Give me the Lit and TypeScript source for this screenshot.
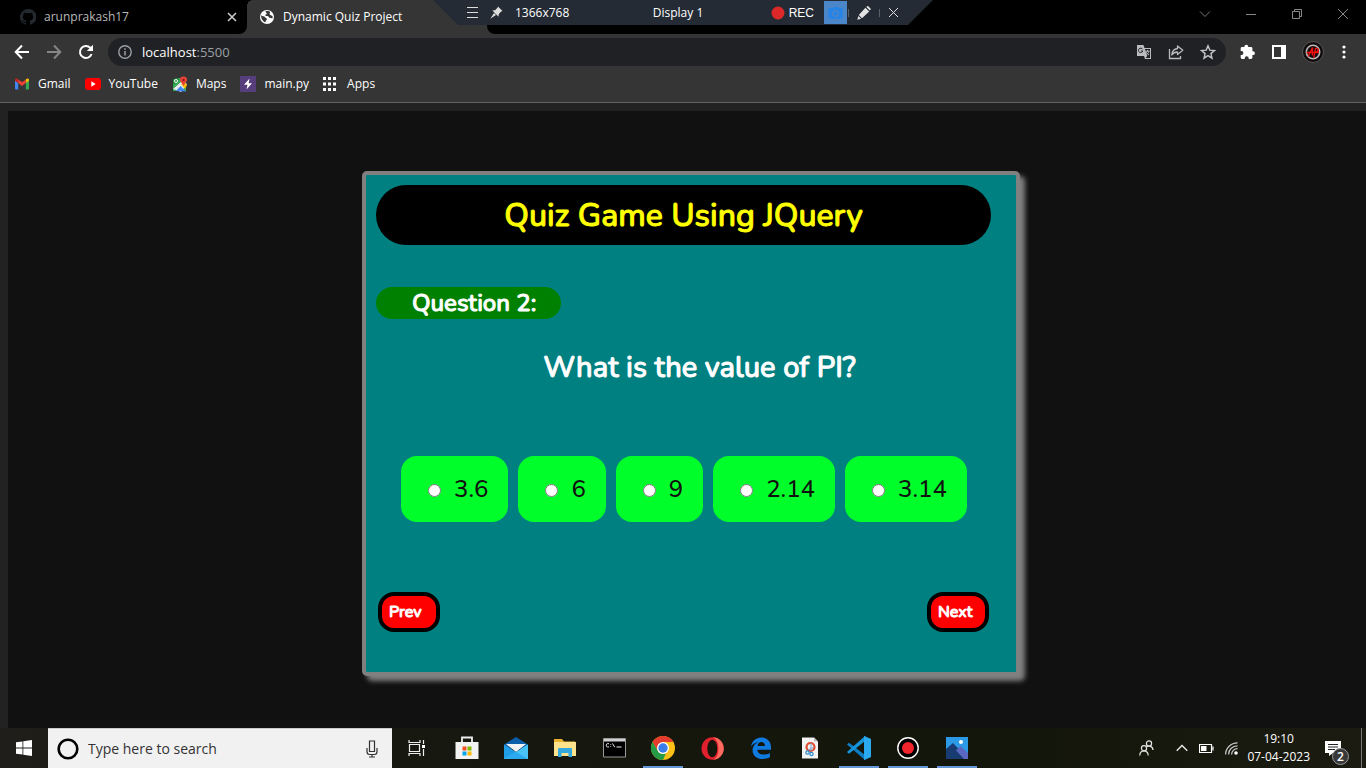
import { LitElement, html, css, svg, TemplateResult } from "lit";
import { customElement, state } from "lit/decorators.js";
import { classMap } from "lit/directives/class-map.js";

const icon = (w: number, h: number, box: string, body: unknown): TemplateResult =>
  html`<svg width=${w} height=${h} viewBox=${box} fill="none" aria-hidden="true">${body}</svg>`;

/* Browser icons */
const github = icon(16, 16, "0 0 16 16", svg`<path fill="#24292f" fill-rule="evenodd" d="M8 0a8 8 0 0 0-2.53 15.59c.4.07.55-.17.55-.38v-1.34C3.8 14.35 3.33 12.9 3.33 12.9c-.36-.92-.89-1.17-.89-1.17-.73-.5.05-.49.05-.49.8.06 1.23.83 1.23.83.71 1.22 1.87.87 2.33.66.07-.52.28-.87.5-1.07-1.77-.2-3.64-.89-3.64-3.95 0-.88.31-1.59.82-2.15-.08-.2-.36-1.02.08-2.12 0 0 .67-.21 2.2.82a7.6 7.6 0 0 1 4 0c1.53-1.04 2.2-.82 2.2-.82.44 1.1.16 1.92.08 2.12.51.56.82 1.27.82 2.15 0 3.07-1.87 3.75-3.65 3.95.29.25.54.73.54 1.48v2.2c0 .21.15.46.55.38A8 8 0 0 0 8 0Z"/>`);
const globe = icon(14, 14, "0 0 14 14", svg`<circle cx="7" cy="7" r="7" fill="#fff"/><path fill="#353535" d="M1 5.2C2.6 6.4 4.4 5.9 5 7.2c.5 1.100 1.900.8 2 1.900.1 1.200-1.400 1-1.300 2.200.1 1-.5 1.200-1.100.7C2.600 10.900 1 8.500 1 5.200ZM5.500 1.300c-.3 1.500 1.600 1.200 1.300 2.500-.2.9-1.700.6-1.600 1.500.2 1.200 2.200.4 3 .9.900.600.500 1.500 1.700 1.600 1.100.1 1.100.9 2.700.2l.2-1.600c-1.100-.4-1.300-1.300-2.200-1.500-1-.2-1.400-1-.7-1.900.4-.5.200-1.200-.4-1.600C8.200.9 6.700.900 5.500 1.300Z"/>`);
const cross = icon(10, 10, "0 0 10 10", svg`<path d="M1 1l8 8M9 1L1 9" stroke="#cfcfcf" stroke-width="1.500"/>`);
const back = icon(16, 16, "0 0 16 16", svg`<path d="M15 8H2M8 1.500L1.700 8 8 14.500" stroke="#fff" stroke-width="2"/>`);
const forward = icon(16, 16, "0 0 16 16", svg`<path d="M1 8h13M8 1.500L14.300 8 8 14.500" stroke="#868686" stroke-width="2"/>`);
const reload = icon(16, 16, "0 0 16 16", svg`<path d="M13.600 10A6 6 0 1 1 12.300 3.800L14 5.500" stroke="#fff" stroke-width="2"/><path fill="#fff" d="M15 .8v6.200H8.800z"/>`);
const info = icon(14, 14, "0 0 14 14", svg`<circle cx="7" cy="7" r="6.200" stroke="#9aa0a6" stroke-width="1.400"/><path d="M7 6v4.500M7 3.300v1.500" stroke="#9aa0a6" stroke-width="1.500"/>`);
const translate = icon(16, 16, "0 0 16 16", svg`<path fill="#b9bbbd" d="M1 1h6.500l1 3H15v11H9l-1-3H1z"/><path fill="#202124" d="M8.900 5H14v9H9.800l1.400-2z"/><path d="M6.600 5.300a2.200 2.200 0 1 0 .2 1.700H5" stroke="#202124"/><path d="M9.500 7.200h4M11.500 6v1.200M12.800 7.200c-.3 1.700-1.300 2.700-2.300 3.400M10.300 8.200c.5 1.200 1.500 2.200 2.700 2.900" stroke="#b9bbbd"/>`);
const share = icon(16, 16, "0 0 16 16", svg`<path d="M1.500 5v9.500h11V12" stroke="#b9bbbd" stroke-width="1.300"/><path d="M9.500 2l5.300 4.300-5.300 4.200V8C6.500 8 5 9 3.800 11c.2-3.500 2.200-6 5.700-6.500z" stroke="#b9bbbd" stroke-width="1.300" stroke-linejoin="round"/>`);
const star = icon(16, 16, "0 0 16 16", svg`<path d="M8 1.800l1.800 4.300 4.700.4-3.600 3.100 1.100 4.600L8 11.700l-4 2.500 1.100-4.600L1.500 6.500l4.700-.4z" stroke="#c4c6c8" stroke-width="1.400"/>`);
const puzzle = icon(16, 16, "0 0 16 16", svg`<path fill="#fff" d="M13 7.300h-.6V4.500c0-.8-.6-1.400-1.400-1.400H8.200v-.5a1.900 1.900 0 0 0-3.800 0v.5H2.100C1.300 3.100.7 3.700.7 4.500v2.600h.7a2 2 0 0 1 0 4H.700v2.500c0 .8.6 1.400 1.400 1.400h2.600v-.7a2 2 0 0 1 4 0v.7H11c.8 0 1.400-.6 1.400-1.400v-2.500h.6a1.900 1.900 0 0 0 0-3.800z"/>`);
const sidePanel = icon(14, 14, "0 0 14 14", svg`<path fill="#fff" fill-rule="evenodd" d="M0 0h14v14H0zM2 2h7v10H2z"/>`);
const avatar = icon(22, 22, "0 0 22 22", svg`<circle cx="11" cy="11" r="10.500" fill="#120c0c" stroke="#555"/><circle cx="11" cy="11" r="6.700" stroke="#b9b9b9" stroke-width="1.600"/><path d="M6.200 15.500L10.500 6.500v8M4.500 11.500H17M11.800 17l1.700-9.500c3.600-.8 4 3.200-.8 4" stroke="#f01010" stroke-width="1.400"/>`);
const dots = icon(4, 14, "0 0 4 14", svg`<g fill="#fff"><circle cx="2" cy="2" r="1.600"/><circle cx="2" cy="7" r="1.600"/><circle cx="2" cy="12" r="1.600"/></g>`);
const gmail = icon(16, 12, "-1 0 16 12", svg`<path fill="#4285f4" d="M0 2v8.500c0 .6.400 1 1 1h2.200V5z"/><path fill="#34a853" d="M14 2v8.500c0 .6-.4 1-1 1h-2.200V5z"/><path fill="#fbbc04" d="M10.800 1.500V5L14 2.700V2c0-1.500-1.500-1.900-2.500-1.100z"/><path fill="#c5221f" d="M0 2v.7L3.200 5V1.500L2.500.9C1.500.1 0 .5 0 2z"/><path fill="#ea4335" d="M3.200 1.500L7 4.300l3.800-2.800V5L7 8 3.200 5z"/>`);
const youtube = icon(16, 12, "0 0 16 12", svg`<rect width="16" height="12" rx="3" fill="#f00"/><path fill="#fff" d="M6.300 3.300v5.400L10.700 6z"/>`);
const maps = icon(16, 16, "0 0 16 16", svg`<path fill="#34a853" d="M1 3l7-1 6 4v9H1z"/><path fill="#e8eaed" d="M1 13L10 5l5 3-6 8z"/><path fill="#4285f4" d="M4 15l4.500-5 5.500 5.500z"/><path fill="#fbbc04" d="M9 8l4-1 2 2-2 4z"/><path fill="#1e8e3e" d="M1 3h7L1 9z"/><circle cx="4" cy="5" r="1.500" stroke="#fff"/><path fill="#ea4335" d="M11.500.5a3.500 3.500 0 0 1 3.500 3.600c0 2-2 2.900-3.500 5.900C10 7 8 6.100 8 4.100A3.500 3.500 0 0 1 11.500.5z"/><circle cx="11.500" cy="4" r="1.200" fill="#8c1d18"/>`);
const bolt = icon(16, 16, "0 0 16 16", svg`<path fill="#563d7c" d="M0 0h16v16H0z"/><path fill="#fff" d="M9.600 2.500L4 8.800h3.500l-1 4.700L12 7.300H8.600z"/>`);
const appsGrid = icon(16, 14, "0 0 16 14", svg`<path fill="#fff" d="M0 0h3v3H0zM5 0h3v3H5zM10 0h3v3h-3zM0 5.500h3v3H0zM5 5.500h3v3H5zM10 5.500h3v3h-3zM0 11h3v3H0zM5 11h3v3H5zM10 11h3v3h-3z"/>`);
const chevDown = icon(12, 12, "0 0 12 12", svg`<path d="M1 3.500l5 5 5-5" stroke="#777"/>`);
const minimise = icon(12, 12, "0 0 12 12", svg`<path d="M1 6.500h10" stroke="#888"/>`);
const restore = icon(12, 12, "0 0 12 12", svg`<path d="M1.500 3.500h7v7h-7zM3.500 3V1.500h7v7H9" stroke="#888"/>`);
const closeWin = icon(12, 12, "0 0 12 12", svg`<path d="M1 1l10 10M11 1L1 11" stroke="#888"/>`);

/* Recorder icons */
const burger = icon(11, 11, "0 0 11 11", svg`<path d="M0 .5h11M0 5.500h11M0 10.500h11" stroke="#dcdcdc"/>`);
const pin = icon(13, 13, "0 0 13 13", svg`<path fill="#ddd" d="M8 .5L12.500 5l-1.300.5L8.800 8l-.3 2.700L2.300 4.500 5 4.200 7.500 1.800zM4 7l2 2-5.700 3.700z"/>`);
const recDot = icon(14, 14, "0 0 14 14", svg`<circle cx="7" cy="7" r="6.500" fill="#dc2828"/>`);
const camera = icon(15, 14, "0 0 16 14", svg`<path fill="#2684e8" fill-rule="evenodd" d="M2 2h2.700L6 .5h4L11.300 2H14c1 0 1.500.5 1.500 1.500v8c0 1-.5 1.500-1.500 1.500H2c-1 0-1.500-.5-1.500-1.500v-8C.500 2.500 1 2 2 2zm6 1.800a3.700 3.700 0 1 0 0 7.400 3.700 3.700 0 0 0 0-7.400z"/><circle cx="8" cy="7.500" r="2.200" fill="#2684e8"/>`);
const pencil = icon(14, 14, "0 0 14 14", svg`<path fill="#e2e2e2" d="M8.400 1.800l3.800 3.800L5 12.200 1.800 9zM9.300 1L10.800-.2 14 3l-1.200 1.500zM1.300 9.900l2.800 2.800L.3 13.700z"/>`);
const thinCross = icon(11, 11, "0 0 11 11", svg`<path d="M1 1l9 9M10 1l-9 9" stroke="#dcdcdc"/>`);

/* Taskbar icons */
const windows = icon(16, 16, "0 0 16 16", svg`<path fill="#fff" d="M0 2.300L6.500 1.400v6.200H0zM7.300 1.300L16 0v7.600H7.300zM0 8.400h6.500v6.200L0 13.700zM7.300 8.400H16V16l-8.700-1.300z"/>`);
const cortana = icon(22, 22, "0 0 22 22", svg`<circle cx="11" cy="11" r="9.300" stroke="#000" stroke-width="2.600"/>`);
const mic = icon(12, 18, "0 0 12 18", svg`<path d="M3.500 1h5v10.500h-5zM1 8v3.500C1 13 2 14.500 3.500 14.500h5c1.500 0 2.500-1.500 2.500-3V8M6 14.500V17M3 17h6" stroke="#333" stroke-width="1.200"/>`);
const taskView = icon(17, 16, "0 0 17 16", svg`<path d="M1 0v2.500h11V0M1.500 4.500h10v7h-10zM1 16v-2.500h11V16M15.500 0v4M15.500 9v7" stroke="#eee" stroke-width="1.200"/><path fill="#fff" d="M14 5h3v3h-3z"/>`);
const store = icon(24, 24, "0 0 24 24", svg`<path d="M7 7V1.500h10V7" stroke="#eee" stroke-width="1.800"/><path fill="#f2f2f2" d="M.5 6h23v17h-23z"/><path fill="#f25022" d="M7.500 10.500h4v4h-4z"/><path fill="#7fba00" d="M12.500 10.500h4v4h-4z"/><path fill="#00a4ef" d="M7.500 15.500h4v4h-4z"/><path fill="#ffb900" d="M12.500 15.500h4v4h-4z"/>`);
const mail = icon(24, 24, "0 0 24 24", svg`<path fill="#0d5ea8" d="M0 8.500L12 1l12 7.500-4 4H4z"/><path fill="#f3f3f3" d="M2 8h20l-10 8z"/><path fill="#1f9de5" d="M0 8.500L12 16l12-7.500V23H0z"/><path fill="#49c3f5" d="M24 8.500V23H0l12-7z"/><path fill="#2baaf0" d="M0 23l12-7 12 7z"/>`);
const folder = icon(22, 20, "0 0 22 20", svg`<path fill="#e9b32f" d="M0 1h8l2 2.500h11V8H0z"/><path fill="#ffe38c" d="M0 4h22v14H0z"/><path fill="#33a9e0" d="M4 19v-7.500c0-1 .5-1.500 1.500-1.500h11c1 0 1.500.5 1.500 1.500V19h-3.500v-4h-7v4z"/>`);
const terminal = icon(23, 20, "0 0 23 20", svg`<path fill="#000" stroke="#9a9a9a" d="M.5.5h22v18.500H.5z"/><path fill="#cfcfcf" d="M1 1h21v2.500H1z"/><path d="M6 5.700H4.300c-1.400 0-1.400 3.200 0 3.200H6M7.700 6v.7M7.700 8.300V9M9.500 5.500l2.200 3.700M13.500 9h5" stroke="#eee"/>`);
const chromeLogo = icon(24, 24, "0 0 24 24", svg`<circle cx="12" cy="12" r="12" fill="#fbc116"/><path fill="#e33b2e" d="M1.600 6A12 12 0 0 1 22.400 6H12v6l-5.200 3z"/><path fill="#259b47" d="M1.600 6l5.200 9c2 3 5 3.500 8 2.500L12 24A12 12 0 0 1 1.600 6z"/><circle cx="12" cy="12" r="6" fill="#fff"/><circle cx="12" cy="12" r="4.700" fill="#3a7ce8"/>`);
const opera = icon(23, 23, "0 0 23 23", svg`<ellipse cx="11.500" cy="11.500" rx="11" ry="11.300" fill="#e0202c"/><path fill="#ff6b5e" d="M11.500.2a11.300 11.300 0 0 1 0 22.600c3-.5 6-4 6-11.300S14 .9 11.500.2z"/><ellipse cx="11.300" cy="11.500" rx="5" ry="8.800" fill="#14160c"/>`);
const edge = icon(22, 22, "0 0 22 22", svg`<path fill="#0f7be0" d="M1 9.800C1.700 4 6.200.5 11.200.5c6.500 0 9.800 4.500 9.800 10v2.300H7.400c.2 5.400 7.700 6 12.500 3.100v4.400c-8.500 4-17.300.6-17.300-6.900 0-4 2.300-7 5.900-8.500C4.800 5.500 2.300 7.200 1 9.800zM7.600 9H15c0-2.500-1.300-3.900-3.500-3.900S7.800 6.600 7.600 9z"/>`);
const snip = icon(16, 22, "0 0 16 22", svg`<path fill="#f3f3f3" d="M0 .5h12l4 4v17H0z"/><path fill="#bbb" d="M12 .5v4h4z"/><ellipse cx="8.500" cy="10" rx="4" ry="4" stroke="#df4b2b" stroke-width="2.200"/><path d="M9 6v8M6 13l6-3" stroke="#7aa7d8"/><circle cx="5.500" cy="15.500" r="1.700" stroke="#2b8bd0" stroke-width="1.200"/><circle cx="9.500" cy="17" r="1.600" stroke="#2b8bd0" stroke-width="1.200"/>`);
const vscode = icon(24, 24, "0 0 24 24", svg`<path fill="#0d7dc4" d="M0 8.500l2-1.800L18 19v5z"/><path fill="#1595dc" d="M0 16l2 1.700L18 5V0z"/><path fill="#2aa9f0" d="M17.500 0L24 3v18l-6.500 3c-.6-.3-.5-.8-.5-1.500v-21c0-.7-.1-1.200.5-1.500z"/>`);
const recorder = icon(22, 22, "0 0 22 22", svg`<circle cx="11" cy="11" r="10.200" fill="#000" stroke="#fff" stroke-width="1.400"/><circle cx="11" cy="11" r="6" fill="#f0252b"/>`);
const photos = icon(22, 22, "0 0 22 22", svg`<path fill="#2c9ae6" d="M0 0h22v22H0z"/><path fill="#183c72" d="M0 12l7-6 15 16H0z"/><path fill="#5a67c0" d="M10 13.500l4.500-4.500L22 16v6h-4z"/><circle cx="15" cy="5" r="2" fill="#fff"/>`);
const people = icon(15, 16, "0 0 15 16", svg`<g stroke="#e6e6e6" stroke-width="1.200"><circle cx="10" cy="3.500" r="2.600"/><path d="M7.500 6.600C9.500 5.400 14 6 14 10"/><circle cx="5" cy="8.300" r="2.600"/><path d="M.8 15.500c0-6 8.400-6 8.400 0"/></g>`);
const chevUp = icon(12, 8, "0 0 12 8", svg`<path d="M.7 6.800L6 1.500l5.300 5.300" stroke="#eee" stroke-width="1.300"/>`);
const battery = icon(15, 9, "0 0 15 9", svg`<path d="M.5.5h12v8H.5zM14 2.500v4" stroke="#fff" stroke-width="1.200"/><path fill="#fff" d="M2 2h5.500v5H2z"/>`);
const wifi = icon(13, 13, "0 0 13 13", svg`<path d="M.6 12.500C.6 6 6 .8 12.500.8M3.600 12.500c0-5 4-8.700 8.900-8.700M6.600 12.500c0-3.300 2.600-5.800 5.900-5.800" stroke="#ccc" stroke-width="1.200"/><circle cx="11" cy="11" r="1.800" fill="#fff"/>`);
const note = icon(16, 15, "0 0 16 15", svg`<path fill="#fff" d="M0 0h16v12H8l-4 3v-3H0z"/><path d="M3 3.500h10M3 6h10M3 8.500h7" stroke="#222"/>`);

const BOOKMARKS: [TemplateResult, string][] = [
  [gmail, "Gmail"], [youtube, "YouTube"], [maps, "Maps"], [bolt, "main.py"], [appsGrid, "Apps"],
];

@customElement("browser-bar")
class BrowserBar extends LitElement {
  static styles = css`
    :host { display: block; background: #353535; color: #fff; font: 12px/16px "Open Sans", "Noto Sans", sans-serif; }
    button { border: 0; padding: 0; background: none; color: inherit; font: inherit; display: flex; align-items: center; justify-content: center; }
    svg { display: block; flex: none; }
    .tabs { display: flex; height: 34px; }
    .tab { display: flex; align-items: center; box-sizing: border-box; padding: 0 10px 0 20px; gap: 8px; }
    .idle { width: 247px; background: #000; color: #b8b8b8; border-bottom-right-radius: 8px; }
    .live { width: 240px; padding-left: 13px; gap: 9px; position: relative; }
    .live::before { content: ""; position: absolute; inset: 0 auto auto 0; width: 6px; height: 6px; background: radial-gradient(circle at 6px 6px, #353535 6px, #000 6px); }
    .name { flex: 1; white-space: nowrap; }
    .window { flex: 1; display: flex; justify-content: flex-end; background: #000; border-bottom-left-radius: 8px; padding-bottom: 6px; }
    .window button { width: 46px; }
    .tools { display: flex; align-items: center; height: 36px; padding: 0 18px 0 14px; gap: 16px; }
    .tools .menu { width: 8px; }
    .address { flex: 1; height: 28px; border-radius: 14px; background: #202124; display: flex; align-items: center; gap: 16px; padding: 0 10px; margin: 0 -2px 0 -2px; }
    .url { flex: 1; display: flex; align-items: center; gap: 10px; font-size: 13px; color: #9aa0a6; }
    .host { color: #fff; }
    .marks { display: flex; height: 33px; box-sizing: border-box; align-items: center; padding: 0 14px 4px; gap: 14px; border-bottom: 1px solid #646464; }
    .mark { display: flex; align-items: center; gap: 8px; color: #fff; text-decoration: none; }
  `;
  render() {
    return html`
      <div class="tabs">
        <div class="tab idle">${github}<span class="name">arunprakash17</span><button aria-label="Close tab">${cross}</button></div>
        <div class="tab live">${globe}<span class="name">Dynamic Quiz Project</span></div>
        <div class="window">
          <button aria-label="Search tabs">${chevDown}</button><button aria-label="Minimise">${minimise}</button>
          <button aria-label="Restore">${restore}</button><button aria-label="Close">${closeWin}</button>
        </div>
      </div>
      <div class="tools">
        <button aria-label="Back">${back}</button><button aria-label="Forward">${forward}</button><button aria-label="Reload">${reload}</button>
        <div class="address">
          <div class="url">${info}<span><span class="host">localhost</span>:5500</span></div>
          <button aria-label="Translate">${translate}</button><button aria-label="Share">${share}</button><button aria-label="Bookmark">${star}</button>
        </div>
        <button aria-label="Extensions">${puzzle}</button><button aria-label="Side panel">${sidePanel}</button>
        <button aria-label="Profile">${avatar}</button><button class="menu" aria-label="Menu">${dots}</button>
      </div>
      <nav class="marks">${BOOKMARKS.map(([i, n]) => html`<a class="mark" href="#">${i}<span>${n}</span></a>`)}</nav>`;
  }
}

@customElement("recorder-bar")
class RecorderBar extends LitElement {
  static styles = css`
    :host { display: flex; align-items: center; box-sizing: border-box; width: 500px; height: 25px; padding: 0 34px; background: #242b34; clip-path: polygon(0 0, 100% 0, 475px 100%, 25px 100%); color: #fff; font: 12px/16px "Open Sans", "Noto Sans", sans-serif; }
    button { border: 0; padding: 0; background: none; color: inherit; display: flex; align-items: center; gap: 4px; font: 12px/16px "Liberation Sans", sans-serif; }
    svg { display: block; flex: none; }
    .left { flex: 1; display: flex; align-items: center; gap: 12px; }
    .title { margin-right: 10px; }
    .right { flex: 1; display: flex; align-items: center; justify-content: flex-end; gap: 8px; }
    .shot { background: #4a86c8; height: 23px; padding: 0 4px; margin: 0 -7px 0 2px; }
    .bar { width: 1px; height: 8px; background: #59616b; }
  `;
  render() {
    return html`
      <div class="left"><button aria-label="Menu">${burger}</button><button aria-label="Pin">${pin}</button><span>1366x768</span></div>
      <span class="title">Display 1</span>
      <div class="right">
        <button>${recDot}REC</button><button class="shot" aria-label="Screenshot">${camera}</button><span class="bar"></span>
        <button aria-label="Draw">${pencil}</button><span class="bar"></span><button aria-label="Close">${thinCross}</button>
      </div>`;
  }
}

@customElement("quiz-card")
class QuizCard extends LitElement {
  @state() private choice = "";
  private answers = ["3.6", "6", "9", "2.14", "3.14"];
  static styles = css`
    :host { display: block; box-sizing: border-box; width: 658px; padding: 10px 25px 40px 10px; border: 4px solid #808080; border-radius: 5px; background: #008080; box-shadow: 5px 5px 5px #808080; color: #fff; font-family: Nunito, Lato, sans-serif; }
    h1, h2, p { margin: 0; }
    h1, h2, .prompt, .nav button { font-weight: 500; -webkit-text-stroke: 1px currentColor; }
    h1 { height: 60px; border-radius: 30px; background: #000; color: #ff0; font-size: 32px; line-height: 62px; text-align: center; }
    h2 { width: 185px; box-sizing: border-box; padding-left: 36px; margin-top: 42px; border-radius: 16px; background: #008000; font-size: 24px; line-height: 32px; }
    .prompt { margin-top: 29px; padding-left: 32px; font-size: 29px; line-height: 40px; text-align: center; }
    .answers { display: flex; gap: 10px; margin: 68px 0 0 25px; }
    .answer { display: flex; align-items: center; gap: 13px; height: 66px; padding: 0 20px 0 27px; border-radius: 16px; background: #00ff2a; color: #111; font-size: 24px; line-height: 32px; font-weight: 500; }
    .answer input { margin: 2px 0 0; width: 13px; height: 13px; }
    .nav { display: flex; justify-content: space-between; margin-top: 70px; padding: 0 2px; }
    .nav button { width: 62px; height: 40px; padding: 0 0 0 7px; border: 4px solid #000; border-radius: 16px; background: #f00; color: #fff; font-family: inherit; font-size: 16px; line-height: 20px; text-align: left; }
  `;
  render() {
    return html`
      <h1>Quiz Game Using JQuery</h1>
      <h2>Question 2:</h2>
      <p class="prompt">What is the value of PI?</p>
      <div class="answers" role="radiogroup">
        ${this.answers.map((a) => html`<label class="answer"><input type="radio" name="answer" .checked=${this.choice === a} @change=${() => (this.choice = a)} /><span>${a}</span></label>`)}
      </div>
      <div class="nav"><button>Prev</button><button>Next</button></div>`;
  }
}

const APPS: [TemplateResult, string, boolean][] = [
  [store, "Store", false], [mail, "Mail", false], [folder, "File Explorer", false], [terminal, "Command Prompt", false],
  [chromeLogo, "Chrome", true], [opera, "Opera", false], [edge, "Edge", false], [snip, "Snipping Tool", false],
  [vscode, "VS Code", true], [recorder, "Recorder", true], [photos, "Photos", true],
];

@customElement("task-bar")
class TaskBar extends LitElement {
  static styles = css`
    :host { display: flex; height: 40px; background: linear-gradient(90deg, #201e1a 0, #171810 400px, #13160a 1000px, #1b1b11 100%); color: #fff; font: 12px/18px "Open Sans", "Noto Sans", sans-serif; }
    button { border: 0; padding: 0; background: none; color: inherit; font: inherit; display: flex; align-items: center; justify-content: center; width: 48px; }
    svg { display: block; flex: none; }
    .search { width: 344px; box-sizing: border-box; display: flex; align-items: center; gap: 9px; padding: 0 14px 0 9px; background: #f1f1f1; border-top: 1px solid #ccc; }
    .search input { flex: 1; min-width: 0; border: 0; padding: 0; background: none; font: 14px/20px "Open Sans", "Noto Sans", sans-serif; outline: 0; }
    .search input::placeholder { color: #333; opacity: 1; }
    .apps { flex: 1; display: flex; gap: 9px; padding-left: 7px; }
    .apps button { width: 40px; box-sizing: border-box; border-bottom: 2px solid transparent; padding-top: 2px; }
    .apps .open { border-color: #6497d6; }
    .tray { display: flex; align-items: center; gap: 11px; }
    .tray .item { width: auto; }
    .tray .first { margin-right: 11px; }
    .clock { text-align: center; margin-left: -2px; }
    .note { position: relative; margin: 0 9px 0 4px; }
    .badge { position: absolute; left: 7px; top: 7px; width: 17px; height: 17px; box-sizing: border-box; border: 1px solid #999; border-radius: 50%; background: #383838; font-size: 12px; line-height: 15px; font-weight: 600; text-align: center; }
    .peek { width: 4px; align-self: stretch; border-left: 1px solid #777; }
  `;
  render() {
    return html`
      <button aria-label="Start">${windows}</button>
      <label class="search">${cortana}<input aria-label="Search" placeholder="Type here to search" />${mic}</label>
      <button aria-label="Task view">${taskView}</button>
      <div class="apps">${APPS.map(([i, n, open]) => html`<button aria-label=${n} class=${classMap({ open })}>${i}</button>`)}</div>
      <div class="tray">
        <button class="item first" aria-label="People">${people}</button><button class="item" aria-label="Hidden icons">${chevUp}</button>
        <button class="item" aria-label="Battery">${battery}</button><button class="item" aria-label="Network">${wifi}</button>
        <div class="clock">19:10<br />07-04-2023</div>
        <button class="item note" aria-label="Notifications">${note}<span class="badge">2</span></button>
        <div class="peek"></div>
      </div>`;
  }
}

@customElement("app-root")
class AppRoot extends LitElement {
  static styles = css`
    :host { display: flex; flex-direction: column; height: 100vh; overflow: hidden; position: relative; background: #222; }
    .overlay { position: absolute; top: 0; left: 50%; margin-left: -250px; }
    .page { flex: 1; min-height: 0; overflow: hidden; box-sizing: border-box; margin: 8px 0 0 8px; padding: 60px 0 0 8px; background: #111; display: flex; justify-content: center; align-items: flex-start; }
  `;
  render() {
    return html`
      <browser-bar></browser-bar>
      <main class="page"><quiz-card></quiz-card></main>
      <task-bar></task-bar>
      <recorder-bar class="overlay"></recorder-bar>`;
  }
}
